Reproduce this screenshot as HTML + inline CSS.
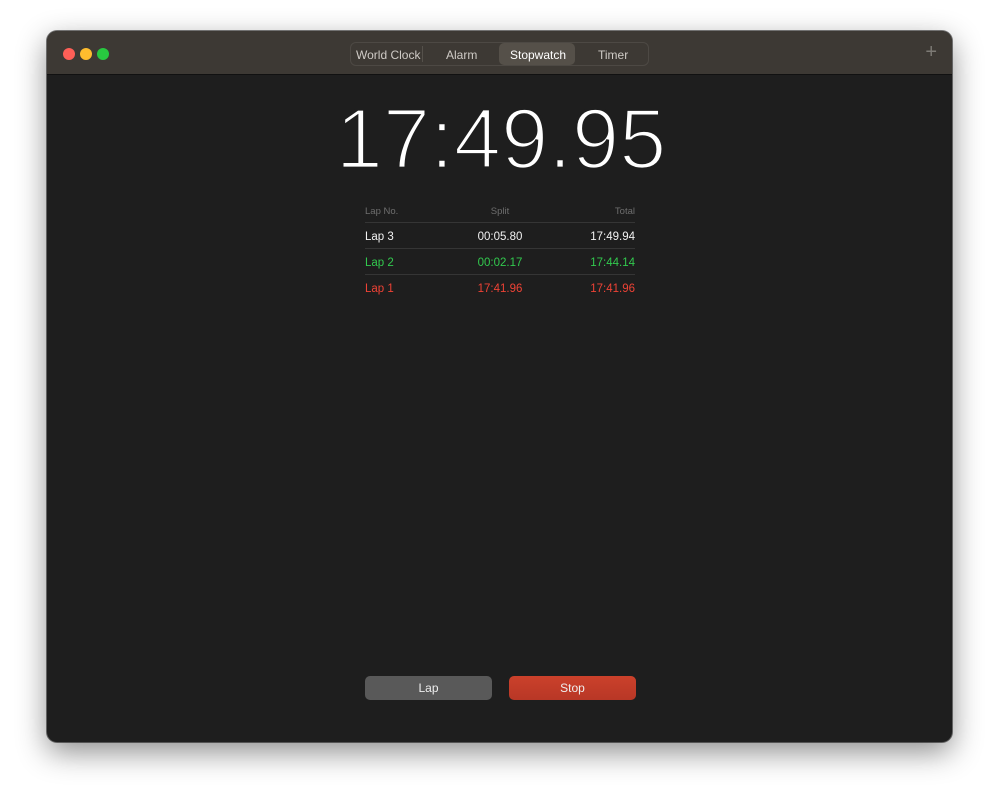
<!DOCTYPE html>
<html><head><meta charset="utf-8"><style>
*{margin:0;padding:0;box-sizing:border-box}
body{width:1000px;height:805px;background:#fff;font-family:"Liberation Sans",sans-serif;position:relative;overflow:hidden}
.win{position:absolute;left:47px;top:31px;width:905px;height:711px;border-radius:10px;background:#1e1e1e;overflow:hidden;box-shadow:0 10px 30px rgba(0,0,0,.45),0 0 0 1px rgba(0,0,0,.5)}
.tb{position:absolute;left:0;top:0;width:100%;height:44px;background:#3d3934;border-bottom:1px solid #111}
.dot{position:absolute;top:17px;width:12px;height:12px;border-radius:50%}
.seg{position:absolute;left:303px;top:11px;width:299px;height:24px;border:1px solid #4d4944;border-radius:6px;font-size:12px;color:#cfcbc6}
.seg span{position:absolute;top:5px}
.sel{position:absolute;left:148px;top:0;width:76px;height:22px;background:#555049;border-radius:5px}
.plus{position:absolute;right:15px;top:10px;color:#7d7a75;font-size:20px;font-weight:300}
.big{position:absolute;left:0;top:60px}
.tbl{position:absolute;left:318px;top:173px;width:270px;font-size:11.5px}
.row{position:relative;height:26px;border-top:1px solid #353535}
.row span{position:absolute;top:8px}
.hdr{height:18px;color:#6e6e6e;font-size:9.5px}
.hdr span{top:2px}
.c2{left:0;width:100%;text-align:center}
.c3{right:0}
.btn{position:absolute;top:645px;width:127px;height:24px;border-radius:5px;color:#eee;font-size:12px;text-align:center;line-height:24px}
</style></head><body>
<div class="win">
 <div class="tb">
  <div class="dot" style="left:16px;background:#fe5f57"></div>
  <div class="dot" style="left:33px;background:#febc2e"></div>
  <div class="dot" style="left:50px;background:#28c840"></div>
  <div class="seg">
   <div class="sel"></div>
   <span style="left:5px">World Clock</span>
   <div style="position:absolute;left:71px;top:3px;width:1px;height:16px;background:#55514b"></div>
   <span style="left:95px">Alarm</span>
   <span style="left:159px;color:#fff;font-weight:500">Stopwatch</span>
   <span style="left:247px">Timer</span>
  </div>
  <div class="plus">+</div>
 </div>
 <svg class="big" width="905" height="100">
  <text x="454" y="77" text-anchor="middle" font-family="Liberation Sans" font-size="85" fill="#fff" stroke="#1e1e1e" stroke-width="2.8">17:49.95</text>
 </svg>
 <div class="tbl">
  <div class="row hdr" style="border-top:none"><span style="left:0">Lap No.</span><span class="c2">Split</span><span class="c3">Total</span></div>
  <div class="row" style="color:#f2f2f2"><span style="left:0">Lap 3</span><span class="c2">00:05.80</span><span class="c3">17:49.94</span></div>
  <div class="row" style="color:#32c94e"><span style="left:0">Lap 2</span><span class="c2">00:02.17</span><span class="c3">17:44.14</span></div>
  <div class="row" style="color:#ee4235"><span style="left:0">Lap 1</span><span class="c2">17:41.96</span><span class="c3">17:41.96</span></div>
 </div>
 <div class="btn" style="left:318px;background:#595959">Lap</div>
 <div class="btn" style="left:462px;background:linear-gradient(#cb412b,#b83726)">Stop</div>
</div>
</body></html>
